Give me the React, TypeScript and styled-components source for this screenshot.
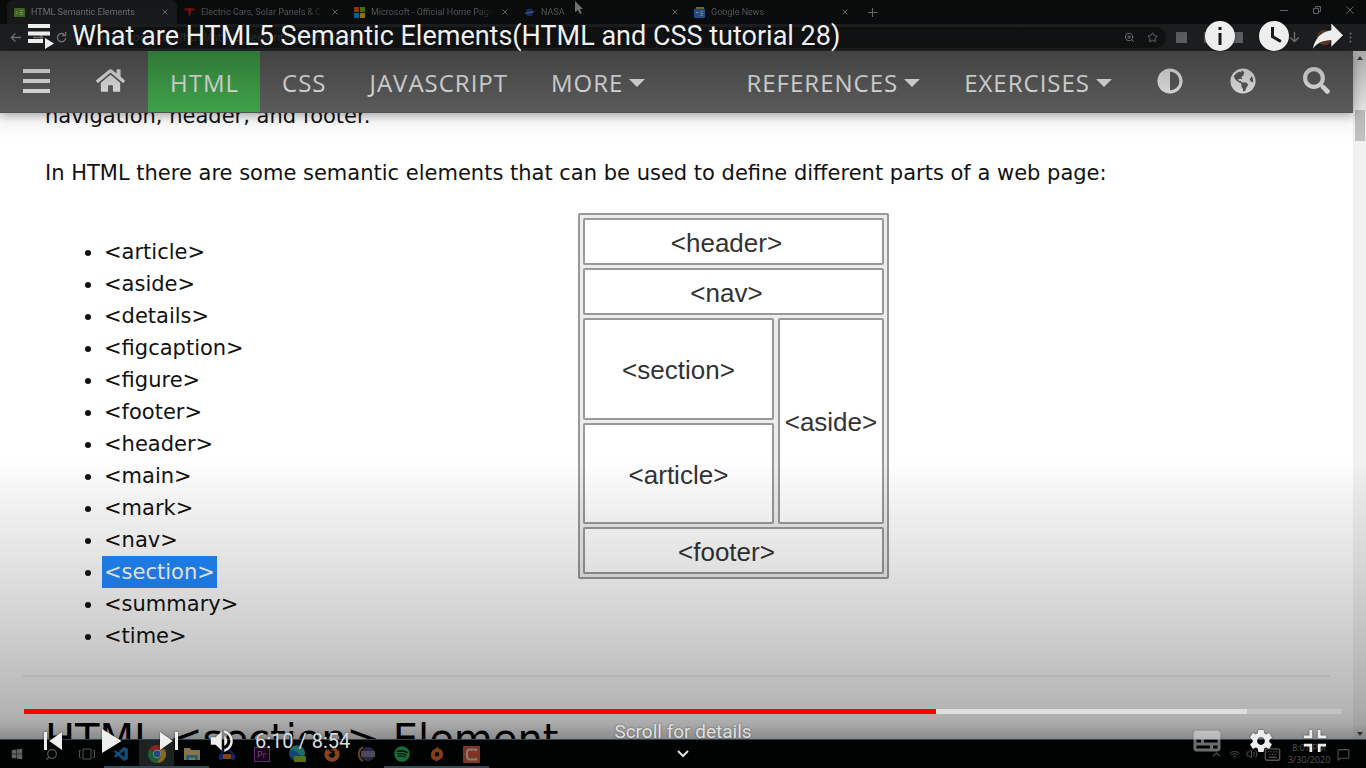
import React from "react";
import styled, { createGlobalStyle, css } from "styled-components";
import {
  FaAdjust,
  FaFirefoxBrowser,
  FaGlobeAmericas,
  FaHome,
  FaSearch,
  FaSpotify,
  FaWindows,
} from "react-icons/fa";
import { VscVscode } from "react-icons/vsc";
import { ChevronUp, Search, Star, Volume2, Wifi, Keyboard, MessageSquare, ZoomIn } from "lucide-react";

const GlobalStyle = createGlobalStyle`
  * { box-sizing: border-box; }
  body { margin: 0; background: #000; overflow: hidden; }
  button { border: 0; padding: 0; background: none; color: inherit; font: inherit; cursor: pointer; }
  a { color: inherit; text-decoration: none; }
  svg { display: block; flex: none; }
`;

const ui = `"Open Sans", "Noto Sans", sans-serif`;
const reading = `"DejaVu Sans", Verdana, sans-serif`;
const player = `Roboto, "Liberation Sans", sans-serif`;

/* ---------- video frame ---------- */

const Player = styled.main`
  position: relative;
  height: 100vh;
  overflow: hidden;
`;

const Frame = styled.div`
  height: 100%;
  display: flex;
  flex-direction: column;
  isolation: isolate;
`;

const TabStrip = styled.div`
  flex: none;
  height: 24px;
  display: flex;
  align-items: stretch;
  padding-left: 7px;
  background: #0f1112;
  color: #7c7e80;
  font: 9px/24px ${player};
`;

const Tab = styled.div<{ $active?: boolean }>`
  width: 170px;
  display: flex;
  align-items: center;
  gap: 6px;
  padding: 0 6px 0 7px;
  border-radius: 6px 6px 0 0;
  ${(p) => p.$active && css`background: #232527; color: #a4a6a8;`}
`;

const TabTitle = styled.span`
  flex: 1;
  overflow: hidden;
  white-space: nowrap;
  mask-image: linear-gradient(to right, #000 88%, transparent);
`;

const TabButton = styled.button`
  display: flex;
  align-items: center;
  justify-content: center;
  width: 12px;
  color: #9a9c9e;
`;

const NewTab = styled(TabButton)`
  width: 30px;
`;

const WindowButtons = styled.div`
  display: flex;
  margin-left: auto;
`;

const WindowButton = styled(TabButton)`
  width: 33px;
  height: 20px;
`;

const Toolbar = styled.div`
  flex: none;
  height: 27px;
  display: flex;
  align-items: center;
  background: #292b2d;
  color: #a0a2a4;
  border-bottom: 1px solid #35373a;
`;

const ToolButton = styled.button`
  width: 23px;
  display: flex;
  justify-content: center;
`;

const BackButtons = styled.div`
  display: flex;
  padding: 0 4px;
`;

const AddressBar = styled.div`
  flex: 1;
  height: 21px;
  display: flex;
  align-items: center;
  padding: 0 2px 0 24px;
  border-radius: 10px;
  background: #17191a;
`;

const Address = styled.span`
  flex: 1;
  font: 11px/20px ${ui};
  color: #46484a;
`;

const Extensions = styled.div`
  width: 200px;
  display: flex;
  align-items: center;
  justify-content: space-between;
  padding: 0 14px 0 10px;
`;

const Square = styled.span`
  width: 11px;
  height: 11px;
  border-radius: 1px;
  background: #85878a;
`;

const Avatar = styled(Square)`
  border-radius: 50%;
  width: 15px;
  height: 15px;
  background: #8c4f38;
`;

const Viewport = styled.div`
  flex: 1;
  min-height: 0;
  display: flex;
`;

const Site = styled.div`
  flex: 1;
  min-width: 0;
  display: flex;
  flex-direction: column;
  background: #fff;
`;

const ScrollTrack = styled.div`
  width: 13px;
  display: flex;
  flex-direction: column;
  align-items: center;
  background: #f1f1f1;
  padding: 5px 0 3px;
  justify-content: space-between;
`;

const ScrollThumb = styled.div`
  width: 10px;
  height: 31px;
  margin-top: 50px;
  margin-bottom: auto;
  background: #c1c1c1;
`;

const Arrow = styled.span<{ $down?: boolean }>`
  border: 3px solid transparent;
  ${(p) =>
    p.$down
      ? css`border-top: 4px solid #505050; border-bottom: 0;`
      : css`border-bottom: 4px solid #505050; border-top: 0;`}
`;

const SiteNav = styled.nav`
  position: relative;
  z-index: 1;
  flex: none;
  height: 62px;
  display: flex;
  background: #5f5f5f;
  border-bottom: 1px solid #555;
  box-shadow: 0 2px 10px rgba(0, 0, 0, 0.35);
  color: #f1f1f1;
  font: 24px/58px ${ui};
  letter-spacing: 1px;
`;

const NavLink = styled.a<{ $current?: boolean }>`
  display: flex;
  align-items: center;
  gap: 6px;
  padding: 3px 21px 0 22px;
  ${(p) => p.$current && css`background: #43ab4e;`}
`;

const NavIcon = styled(NavLink)`
  padding: 0 23px 2px;
`;

const RightLinks = styled.div`
  display: flex;
  gap: 1px;
  margin-left: auto;
`;

const Caret = styled.span`
  border: 8px solid transparent;
  border-top-color: currentColor;
  border-bottom: 0;
`;

const Article = styled.article`
  flex: 1;
  min-height: 0;
  overflow: hidden;
  padding: 0 39px 0 45px;
  color: #111;
  font: 21px/32px ${reading};
`;

const Intro = styled.p`
  margin: -13px 0 25px;
`;

const Lead = styled.p`
  margin: 0 0 24px;
`;

const Columns = styled.div`
  display: flex;
  align-items: flex-start;
`;

const TagList = styled.ul`
  flex: 0 0 42%;
  margin: 23px 0;
  padding-left: 59px;
`;

const Selected = styled.mark`
  display: inline-block;
  margin-left: -2px;
  padding: 0 2px;
  background: #2289ff;
  color: #fff;
`;

const Diagram = styled.div`
  display: grid;
  grid-template-columns: 191px 106px;
  grid-template-rows: 47px 47px 102px 101px 47px;
  grid-template-areas: "header header" "nav nav" "section aside" "article aside" "footer footer";
  gap: 3px 4px;
  padding: 3px;
  border: 2px solid #999;
  border-radius: 2px;
  background: #ececec;
  color: #333;
  font: 26px/30px "Liberation Sans", Arial, sans-serif;
`;

const Region = styled.div<{ $area: string; $wide?: boolean }>`
  grid-area: ${(p) => p.$area};
  display: flex;
  align-items: center;
  justify-content: center;
  padding: 2px ${(p) => (p.$wide ? 14 : 0)}px 0 0;
  border: 2px solid #999;
  border-radius: 2px;
  background: #fff;
`;

const Rule = styled.hr`
  margin: 0 -16px 34px -22px;
  border: 0;
  border-top: 2px solid #eee;
`;

const Heading = styled.h2`
  margin: 0;
  color: #000;
  font: 400 40px/56px ${reading};
`;

const Taskbar = styled.div`
  flex: none;
  height: 29px;
  display: flex;
  align-items: stretch;
  background: #020304;
  border-top: 1px solid #4b7f94;
`;

const TaskItem = styled.button<{ $open?: boolean; $active?: boolean }>`
  width: 35px;
  display: flex;
  align-items: center;
  justify-content: center;
  &:first-child { width: 34px; }
  ${(p) => p.$open && css`box-shadow: inset 0 -2px #5f8598;`}
  ${(p) => p.$active && css`background: #3a3c3e;`}
`;

const Tray = styled.div`
  margin-left: auto;
  display: flex;
  align-items: center;
  gap: 6px;
  padding-right: 16px;
  color: #9a9a9a;
`;

const Clock = styled.time`
  width: 44px;
  text-align: center;
  font: 9px/12px ${ui};
`;

const Pointer = styled.svg`
  position: absolute;
  top: 1px;
  left: 42%;
`;

/* ---------- player overlay ---------- */

const Overlay = styled.div`
  position: absolute;
  inset: 0;
  display: flex;
  flex-direction: column;
  justify-content: space-between;
  color: #eee;
  font-family: ${player};
  background:
    linear-gradient(rgba(0, 0, 0, 0.38), rgba(0, 0, 0, 0.3) 50px, rgba(0, 0, 0, 0.05) 112px, transparent 140px),
    linear-gradient(to top, rgba(0, 0, 0, 0.46) 29px, rgba(0, 0, 0, 0.33) 45px, rgba(0, 0, 0, 0.29) 60px, rgba(0, 0, 0, 0.2) 128px, rgba(0, 0, 0, 0.11) 208px, rgba(0, 0, 0, 0.05) 268px, transparent 308px);
`;

const TopBar = styled.header`
  display: flex;
  align-items: center;
  height: 54px;
  margin-top: 9px;
  padding: 0 11px 0 28px;
`;

const VideoTitle = styled.h1`
  flex: 1;
  margin: 0;
  font: 400 27px/36px ${player};
  color: #f0f0f0;
  text-shadow: 0 0 2px rgba(0, 0, 0, 0.5);
`;

const PlaylistButton = styled.button`
  width: 44px;
`;

const PlayerButton = styled.button<{ $width?: number; $dim?: boolean }>`
  width: ${(p) => p.$width ?? 54}px;
  height: 54px;
  display: flex;
  align-items: center;
  justify-content: center;
  opacity: ${(p) => (p.$dim ? 0.45 : 1)};
  filter: drop-shadow(0 0 1px rgba(0, 0, 0, 0.5));
`;

const BottomBar = styled.footer`
  padding: 0 24px;
`;

const Progress = styled.div`
  height: 5px;
  display: flex;
  background: rgba(255, 255, 255, 0.22);
`;

const Segment = styled.span<{ $color: string }>`
  background: ${(p) => p.$color};
`;

const Controls = styled.div`
  display: grid;
  grid-template-columns: 1fr auto 1fr;
  height: 54px;
`;

const Group = styled.div<{ $end?: boolean }>`
  display: flex;
  align-items: center;
  justify-content: ${(p) => (p.$end ? "flex-end" : "flex-start")};
`;

const TimeText = styled.span`
  margin-left: 7px;
  font-size: 20px;
  line-height: 54px;
  color: #ddd;
  text-shadow: 0 0 2px rgba(0, 0, 0, 0.5);
`;

const ScrollHint = styled.button`
  display: flex;
  flex-direction: column;
  align-items: center;
  gap: 6px;
  padding-top: 6px;
  font: 19px/24px ${player};
  color: #e2e2e2;
  text-shadow: 0 0 2px rgba(0, 0, 0, 0.5);
`;

/* ---------- drawings ---------- */

const Glyph = ({ d, size = 54 }: { d: string; size?: number }) => (
  <svg width={size} height={size} viewBox="0 0 36 36" fill="currentColor" fillRule="evenodd" aria-hidden="true">
    <path d={d} />
  </svg>
);

const disc = "M18,8A10,10 0 1 0 18,28A10,10 0 1 0 18,8Z";
const shapes = {
  info: disc + "M17,16h2v8h-2ZM17,12h2v2h-2Z",
  later: disc + "M16,19.02V12H18V17.86L23.1,20.81L22.1,22.54Z",
  share:
    "m20.20,14.19 0,-4.45 7.79,7.79 -7.79,7.62 0,-4.56C16.27,20.69 12.10,21.81 9.34,24.76 8.80,25.13 7.60,27.29 8.12,25.65 9.08,21.32 11.80,17.18 15.98,15.38c1.33,-0.60 2.76,-0.98 4.21,-1.19z",
  prev: "m12,12h2v12h-2zm3.5,6 8.5,6V12z",
  play: "M12,26 25,18 12,10z",
  next: "M12,24 20.5,18 12,12V24zM22,12v12h2V12h-2z",
  volume:
    "M8,21H12L17,26V10L12,15H8ZM19,14V22C20.48,21.32 21.5,19.77 21.5,18 21.5,16.26 20.48,14.74 19,14ZM19,11.29C21.89,12.15 24,14.83 24,18 24,21.17 21.89,23.85 19,24.71V26.77C23.01,25.86 26,22.28 26,18 26,13.72 23.01,10.14 19,9.23Z",
  captions:
    "M11,11C9.89,11 9,11.9 9,13V23C9,24.1 9.89,25 11,25H25C26.1,25 27,24.1 27,23V13C27,11.9 26.1,11 25,11ZM11,17H14V19H11ZM20,23H11V21H20ZM25,23H22V21H25ZM25,19H16V17H25Z",
  settings:
    "m23.94,18.78c.03,-.25 .05,-.51 .05,-.78 0,-.27 -.02,-.52 -.05,-.78l1.68,-1.32c.15,-.12 .19,-.33 .09,-.51l-1.6,-2.76c-.09,-.17 -.31,-.24 -.48,-.17l-1.99,.8c-.41,-.32 -.86,-.58 -1.35,-.78l-.30,-2.12c-.02,-.19 -.19,-.33 -.39,-.33l-3.2,0c-.2,0 -.36,.14 -.39,.33l-.30,2.12c-.48,.2 -.93,.47 -1.35,.78l-1.99,-.8c-.18,-.07 -.39,0 -.48,.17l-1.6,2.76c-.10,.17 -.05,.39 .09,.51l1.68,1.32c-.03,.25 -.05,.52 -.05,.78 0,.26 .02,.52 .05,.78l-1.68,1.32c-.15,.12 -.19,.33 -.09,.51l1.6,2.76c.09,.17 .31,.24 .48,.17l1.99,-.8c.41,.32 .86,.58 1.35,.78l.30,2.12c.02,.19 .19,.33 .39,.33l3.2,0c.2,0 .36,-.14 .39,-.33l.30,-2.12c.48,-.2 .93,-.47 1.35,-.78l1.99,.8c.18,.07 .39,0 .48,-.17l1.6,-2.76c.09,-.17 .05,-.39 -.09,-.51l-1.68,-1.32zm-5.94,2.01c-1.54,0 -2.8,-1.25 -2.8,-2.8 0,-1.54 1.25,-2.8 2.8,-2.8 1.54,0 2.8,1.25 2.8,2.8 0,1.54 -1.25,2.8 -2.8,2.8z",
  shrink: "M14,14H10V16H16V10H14ZM22,14V10H20V16H26V14ZM20,26H22V22H26V20H20ZM10,22H14V26H16V20H10Z",
};

const Stroke = ({ d, size = 8 }: { d: string; size?: number }) => (
  <svg width={size} height={size} viewBox="0 0 8 8" fill="none" stroke="currentColor" aria-hidden="true">
    <path d={d} />
  </svg>
);

const cross = "M1.5,1.5 6.5,6.5M6.5,1.5 1.5,6.5";

const Favicon = ({ children }: { children: React.ReactNode }) => (
  <svg width="11" height="11" viewBox="0 0 12 12" aria-hidden="true">{children}</svg>
);

const tabs = [
  {
    title: "HTML Semantic Elements",
    icon: <><rect y="1" width="12" height="10" rx="1" fill="#5f9a2c" /><path d="M2 4l2 2-2 2M6 4h4M6 6h4M6 8h4" stroke="#c8dcb0" fill="none" /></>,
  },
  {
    title: "Electric Cars, Solar Panels & Clean Energy",
    icon: <path d="M0 2q6-2 12 0l-1 2-3-1-2 9-2-9-3 1z" fill="#b3161b" />,
  },
  {
    title: "Microsoft - Official Home Page",
    icon: <><path d="M0 0h5.5v5.5H0z" fill="#e0521f" /><path d="M6.5 0H12v5.5H6.5z" fill="#74ab00" /><path d="M0 6.5h5.5V12H0z" fill="#0098e0" /><path d="M6.5 6.5H12V12H6.5z" fill="#e8a800" /></>,
  },
  {
    title: "NASA",
    icon: <><circle cx="6" cy="6" r="4" fill="#1d459c" /><path d="M1 7l10-2" stroke="#9a9fb5" /></>,
  },
  {
    title: "Google News",
    icon: <><rect x="2" width="9" height="6" fill="#cf9f2a" /><rect y="2" width="12" height="10" rx="1" fill="#3676cf" /><path d="M2 6h3M7 5h3M7 7h3M7 9h3" stroke="#d0dcf0" /></>,
  },
];

const tags = ["article", "aside", "details", "figcaption", "figure", "footer", "header", "main", "mark", "nav", "section", "summary", "time"];

const apps: { name: string; open?: boolean; active?: boolean; icon: React.ReactNode }[] = [
  { name: "Start", icon: <FaWindows size={12} color="#b5b5b5" /> },
  { name: "Search", icon: <Search size={13} color="#b5b5b5" transform="scale(-1 1)" /> },
  {
    name: "Task view",
    icon: <svg width="16" height="12" viewBox="0 0 16 12" fill="none" stroke="#999"><path d="M4 1h8v10H4zM2 2.5H.5v7H2M14 2.5h1.5v7H14" /></svg>,
  },
  { name: "Code", open: true, icon: <VscVscode size={17} color="#2090e0" /> },
  {
    name: "Chrome",
    open: true,
    active: true,
    icon: (
      <svg width="18" height="18" viewBox="0 0 18 18">
        <path d="M9 9L1.2 4.5A9 9 0 0 1 16.8 4.5H9z" fill="#e34a3a" />
        <path d="M9 9L1.2 4.5A9 9 0 0 0 9 18l4-7z" fill="#34b05a" />
        <path d="M9 4.5h7.8A9 9 0 0 1 9 18l4-7z" fill="#f5c435" />
        <circle cx="9" cy="9" r="4.2" fill="#eee" /><circle cx="9" cy="9" r="3.3" fill="#4285f4" />
      </svg>
    ),
  },
  {
    name: "Files",
    open: true,
    icon: <svg width="16" height="14" viewBox="0 0 16 14"><path d="M0 1h6l1 2h9v10H0z" fill="#f5d78a" /><path d="M2 13V8h12v5h-3v-2H5v2z" fill="#4fb0dc" /></svg>,
  },
  {
    name: "Audio editor",
    icon: <svg width="18" height="14" viewBox="0 0 18 14"><path d="M3 9a6 6 0 0 1 12 0" stroke="#2038b0" strokeWidth="2" fill="none" /><rect x="1" y="7" width="4" height="6" rx="2" fill="#2847d4" /><rect x="13" y="7" width="4" height="6" rx="2" fill="#2847d4" /><path d="M5 7h8v5H5z" fill="#f08020" /></svg>,
  },
  {
    name: "Premiere",
    icon: <svg width="16" height="15" viewBox="0 0 16 15"><rect x=".5" y=".5" width="15" height="14" fill="#2a0a35" stroke="#b050cc" /><text x="3" y="11" fontSize="9" fontFamily="Open Sans" fill="#d080e8">Pr</text></svg>,
  },
  {
    name: "Edge",
    icon: <svg width="18" height="18" viewBox="0 0 18 18"><circle cx="9" cy="8" r="8" fill="#1a85d0" /><path d="M2 5a8 8 0 0 1 15 4q-3 3-6 0-3-4-9-4z" fill="#38ccba" /><rect x="6" y="11" width="12" height="6" rx="1" fill="#9cd322" /></svg>,
  },
  { name: "Firefox", icon: <FaFirefoxBrowser size={16} color="#ff7a30" /> },
  {
    name: "Eclipse",
    icon: <svg width="17" height="16" viewBox="0 0 17 16"><path d="M5 1a8 8 0 0 0 0 14" stroke="#c47a34" strokeWidth="2" fill="none" /><circle cx="10" cy="8" r="7" fill="#4a4480" /><path d="M3 6h14M3 8h14M3 10h14" stroke="#ccc" /></svg>,
  },
  { name: "Spotify", open: true, icon: <FaSpotify size={16} color="#28c864" /> },
  {
    name: "Origin",
    open: true,
    icon: <svg width="14" height="16" viewBox="0 0 14 16"><path d="M8 0L6 2.5A6 6 0 0 0 1 9c0 4 3 5.5 5 5.5L5 16l4-2a6 6 0 0 0 4-6c0-4-3-5.5-5-5.5zM7 6a2 2 0 1 1 0 4.500A2 2 0 0 1 7 6z" fill="#f87030" fillRule="evenodd" /></svg>,
  },
  {
    name: "Camtasia",
    open: true,
    icon: <svg width="17" height="17" viewBox="0 0 17 17"><rect width="17" height="17" rx="1" fill="#f06040" /><path d="M13 5V3.500H7Q4 3.500 4 6.500v4q0 3 3 3h6V12" stroke="#e8e8e8" strokeWidth="2" fill="none" /></svg>,
  },
];

export default function App() {
  return (
    <Player>
      <GlobalStyle />
      <Frame>
        <TabStrip>
          {tabs.map((tab, i) => (
            <Tab key={tab.title} $active={i === 0}>
              <Favicon>{tab.icon}</Favicon>
              <TabTitle>{tab.title}</TabTitle>
              <TabButton aria-label={`Close ${tab.title}`}><Stroke d={cross} /></TabButton>
            </Tab>
          ))}
          <NewTab aria-label="New tab"><Stroke d="M4,0V8M0,4H8" size={9} /></NewTab>
          <WindowButtons>
            <WindowButton aria-label="Minimize"><Stroke d="M0,4.5H8" /></WindowButton>
            <WindowButton aria-label="Restore"><Stroke d="M.5,2.5H5.5V7.5H.5ZM2.5,2.5V.5H7.5V5.5H5.5" /></WindowButton>
            <WindowButton aria-label="Close window"><Stroke d="M.5,.5 7.5,7.5M7.5,.5 .5,7.5" /></WindowButton>
          </WindowButtons>
        </TabStrip>
        <Toolbar>
          <BackButtons>
            <ToolButton aria-label="Back"><Stroke d="M8,4H1M4,1 1,4 4,7" size={11} /></ToolButton>
            <ToolButton aria-label="Forward"><Stroke d="M0,4H7M4,1 7,4 4,7" size={11} /></ToolButton>
            <ToolButton aria-label="Reload"><Stroke d="M7,4.5A3,3 0 1 1 6,1.8M7,0V2.5H4.5" size={11} /></ToolButton>
          </BackButtons>
          <AddressBar>
            <Address>w3schools.com/html/html5_semantic_elements.asp</Address>
            <ToolButton aria-label="Zoom"><ZoomIn size={11} /></ToolButton>
            <ToolButton aria-label="Bookmark"><Star size={11} /></ToolButton>
          </AddressBar>
          <Extensions>
            <Square /><Square /><Square /><Square />
            <Stroke d="M4,0V7M1,4 4,7 7,4" size={11} />
            <Avatar />
            <svg width="3" height="11" viewBox="0 0 3 11" fill="currentColor"><circle cx="1.5" cy="1.5" r="1" /><circle cx="1.5" cy="5.5" r="1" /><circle cx="1.5" cy="9.5" r="1" /></svg>
          </Extensions>
        </Toolbar>
        <Viewport>
          <Site>
            <SiteNav>
              <NavIcon href="#menu" aria-label="Menu">
                <svg width="27" height="24" viewBox="0 0 27 24" stroke="currentColor" strokeWidth="4"><path d="M0 2h27M0 12h27M0 22h27" /></svg>
              </NavIcon>
              <NavIcon href="#home" aria-label="Home"><FaHome size={29} /></NavIcon>
              <NavLink href="#html" $current>HTML</NavLink>
              <NavLink href="#css">CSS</NavLink>
              <NavLink href="#javascript">JAVASCRIPT</NavLink>
              <NavLink href="#more">MORE <Caret /></NavLink>
              <RightLinks>
                <NavLink href="#references">REFERENCES <Caret /></NavLink>
                <NavLink href="#exercises">EXERCISES <Caret /></NavLink>
                <NavIcon href="#contrast" aria-label="Contrast"><FaAdjust size={26} /></NavIcon>
                <NavIcon href="#translate" aria-label="Translate"><FaGlobeAmericas size={26} /></NavIcon>
                <NavIcon href="#search" aria-label="Search"><FaSearch size={27} /></NavIcon>
              </RightLinks>
            </SiteNav>
            <Article>
              <Intro>navigation, header, and footer.</Intro>
              <Lead>In HTML there are some semantic elements that can be used to define different parts of a web page:</Lead>
              <Columns>
                <TagList>
                  {tags.map((tag) => (
                    <li key={tag}>{tag === "section" ? <Selected>{`<${tag}>`}</Selected> : `<${tag}>`}</li>
                  ))}
                </TagList>
                <Diagram>
                  <Region $area="header" $wide>{"<header>"}</Region>
                  <Region $area="nav" $wide>{"<nav>"}</Region>
                  <Region $area="section">{"<section>"}</Region>
                  <Region $area="aside">{"<aside>"}</Region>
                  <Region $area="article">{"<article>"}</Region>
                  <Region $area="footer" $wide>{"<footer>"}</Region>
                </Diagram>
              </Columns>
              <Rule />
              <Heading>{"HTML <section> Element"}</Heading>
            </Article>
          </Site>
          <ScrollTrack><Arrow /><ScrollThumb /><Arrow $down /></ScrollTrack>
        </Viewport>
        <Taskbar>
          {apps.map((app) => (
            <TaskItem key={app.name} aria-label={app.name} $open={app.open} $active={app.active}>{app.icon}</TaskItem>
          ))}
          <Tray>
            <ChevronUp size={13} /><Wifi size={11} /><Volume2 size={12} /><Keyboard size={17} />
            <Clock>8:07 PM<br />3/30/2020</Clock>
            <MessageSquare size={13} />
          </Tray>
        </Taskbar>
      </Frame>

      <Pointer width="10" height="14" viewBox="0 0 10 14" fill="#b0b0b0"><path d="M1 0v11l3-2 2 4 1.500-1L6 8h3z" /></Pointer>

      <Overlay>
        <TopBar>
          <PlaylistButton aria-label="Playlist">
            <svg width="26" height="26" viewBox="0 0 26 26" fill="currentColor"><path d="M0 1h22v4H0zM0 8.500h22v4H0zM0 16h15v4H0zM17 15v11l9-5.500z" /></svg>
          </PlaylistButton>
          <VideoTitle>What are HTML5 Semantic Elements(HTML and CSS tutorial 28)</VideoTitle>
          <PlayerButton aria-label="Info"><Glyph d={shapes.info} /></PlayerButton>
          <PlayerButton aria-label="Watch later"><Glyph d={shapes.later} /></PlayerButton>
          <PlayerButton aria-label="Share"><Glyph d={shapes.share} /></PlayerButton>
        </TopBar>
        <BottomBar>
          <Progress role="progressbar" aria-valuenow={370} aria-valuemax={534}>
            <Segment $color="#f00" style={{ width: `${(370 / 534.6) * 100}%` }} />
            <Segment $color="#dedede" style={{ width: `${(126 / 534.6) * 100}%` }} />
          </Progress>
          <Controls>
            <Group>
              <PlayerButton $width={58} aria-label="Previous"><Glyph d={shapes.prev} /></PlayerButton>
              <PlayerButton $width={58} aria-label="Play"><Glyph d={shapes.play} /></PlayerButton>
              <PlayerButton $width={58} aria-label="Next"><Glyph d={shapes.next} /></PlayerButton>
              <PlayerButton $width={50} aria-label="Mute"><Glyph d={shapes.volume} size={44} /></PlayerButton>
              <TimeText>6:10 / 8:54</TimeText>
            </Group>
            <ScrollHint>
              Scroll for details
              <svg width="12" height="8" viewBox="0 0 12 8" fill="none" stroke="currentColor" strokeWidth="2"><path d="M1 1l5 5 5-5" /></svg>
            </ScrollHint>
            <Group $end>
              <PlayerButton $dim aria-label="Subtitles"><Glyph d={shapes.captions} /></PlayerButton>
              <PlayerButton aria-label="Settings"><Glyph d={shapes.settings} size={50} /></PlayerButton>
              <PlayerButton aria-label="Exit full screen"><Glyph d={shapes.shrink} size={50} /></PlayerButton>
            </Group>
          </Controls>
        </BottomBar>
      </Overlay>
    </Player>
  );
}
